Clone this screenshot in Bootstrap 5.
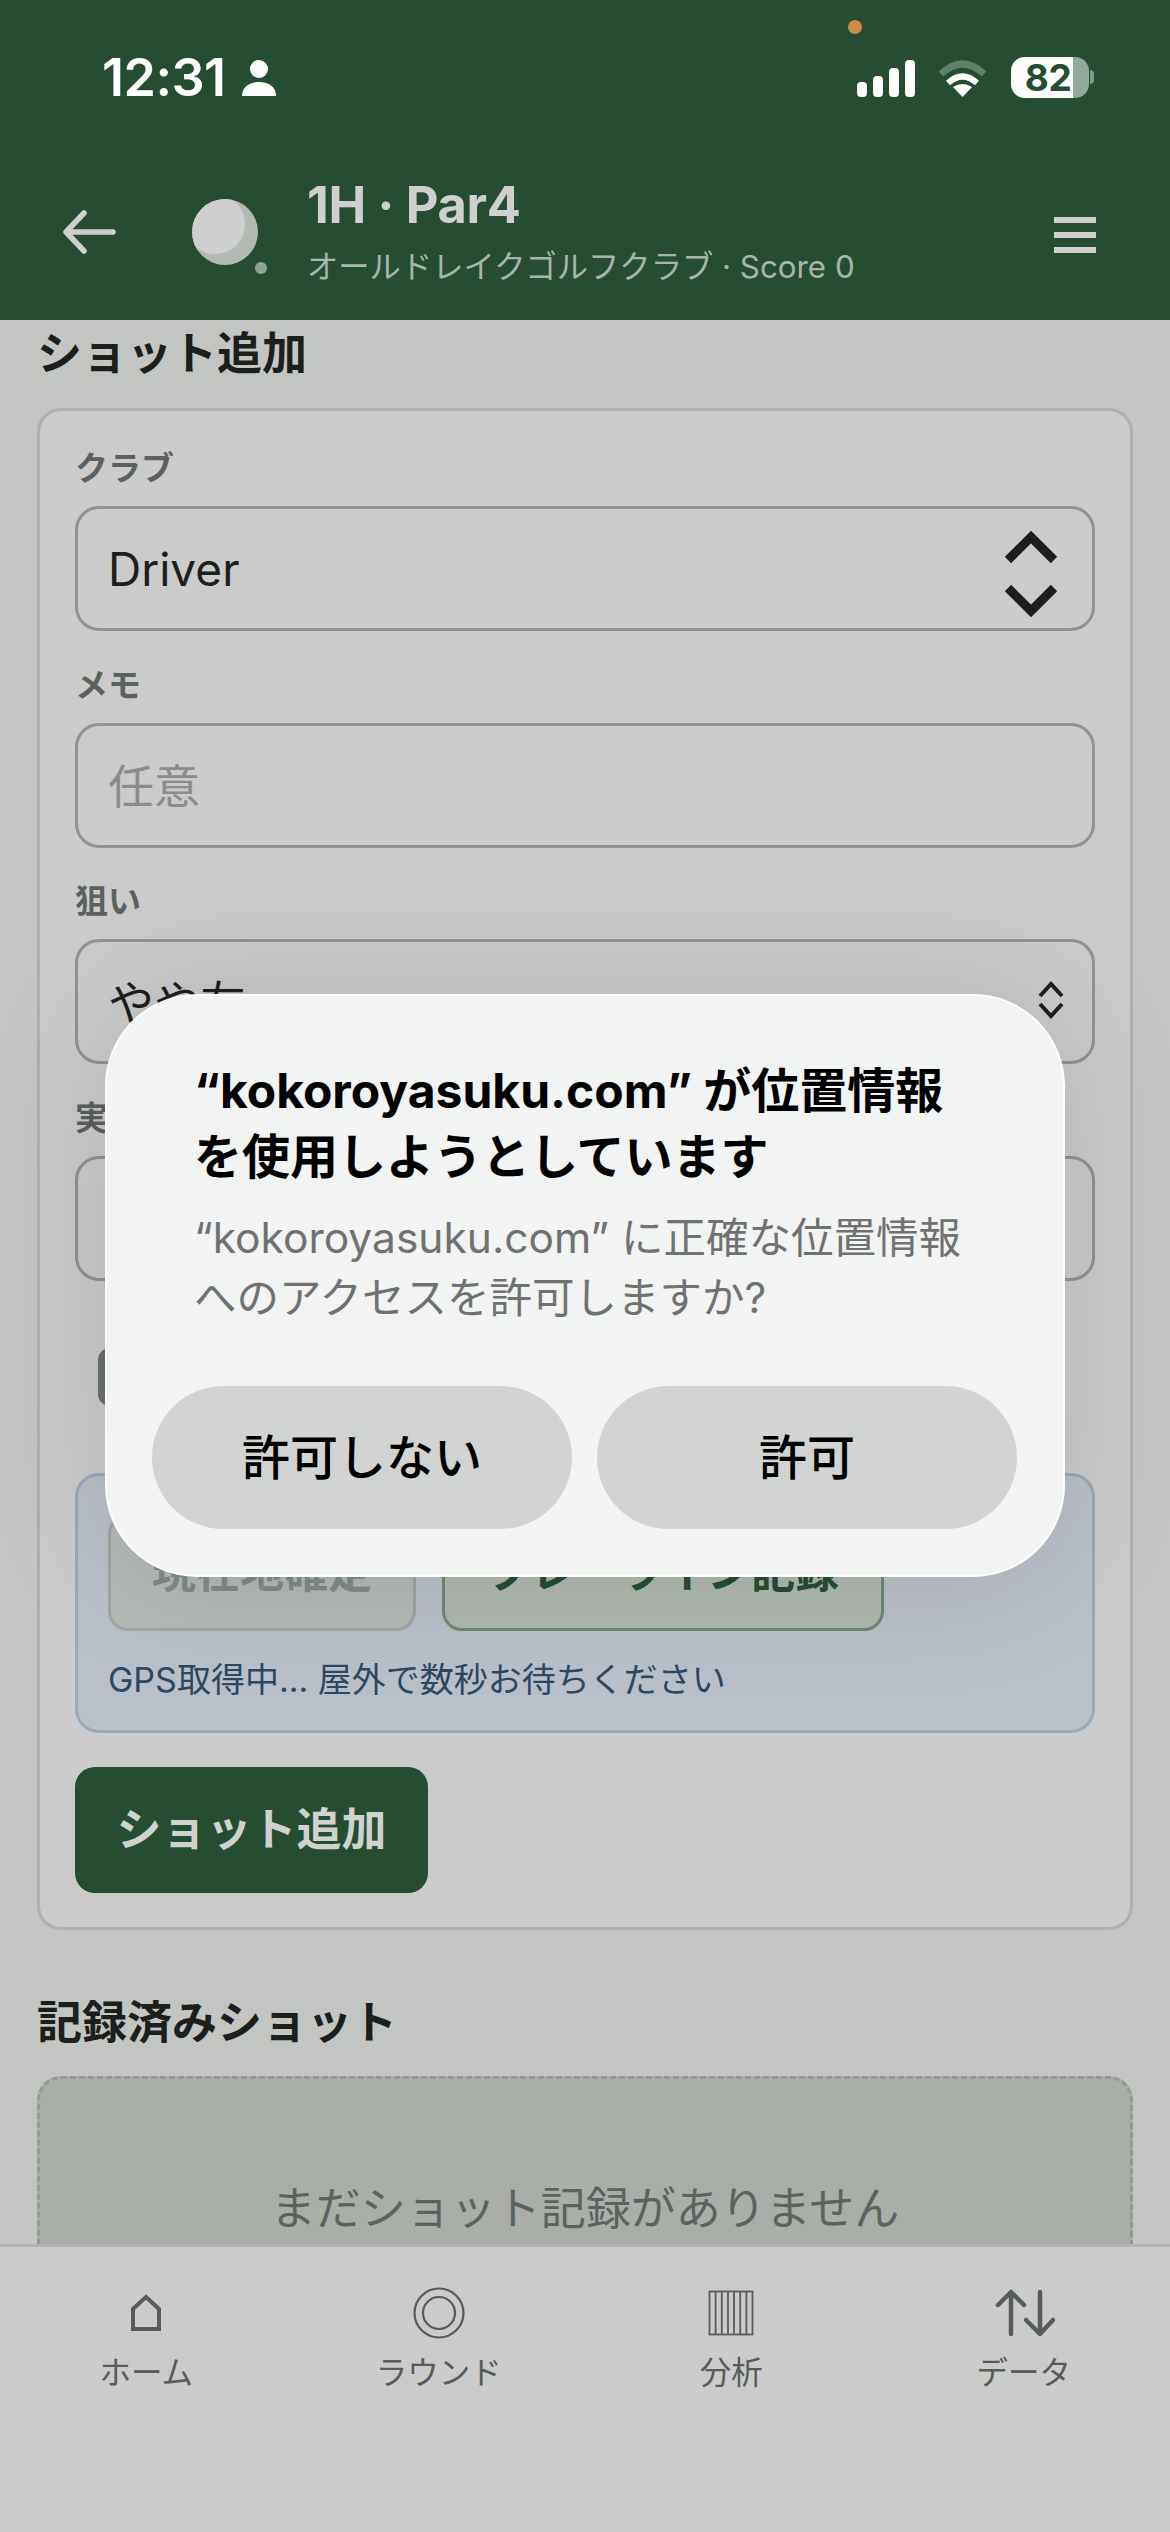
<!doctype html>
<html lang="ja">
<head>
<meta charset="utf-8">
<title>1H Par4</title>
<link rel="stylesheet" href="https://cdn.jsdelivr.net/npm/bootstrap@5.3.0/dist/css/bootstrap.min.css">
<style>
html,body{margin:0;padding:0;width:1170px;height:2532px;overflow:hidden}
body{font-family:Inter,"Noto Sans CJK JP",sans-serif;background:#c3c5c3;color:#1b201d}
.app-shell{width:1170px;height:2532px;position:relative;overflow:hidden}
.status-row{height:144px;background:#264d32;padding:60px 76px 0 102px;color:#fff}
.clock{font-size:52px;font-weight:600;line-height:36px;letter-spacing:-.5px}
.rec-dot{position:absolute;left:848px;top:20px;width:14px;height:14px;border-radius:50%;background:#cf8a46}
.batt{width:78px;height:41px;margin-top:-3px;border-radius:14px;background:linear-gradient(90deg,#fff 62px,#93a99c 62px);color:#264d32;font-size:37px;font-weight:700;line-height:41px;text-align:center;padding-right:4px;letter-spacing:-.5px}
.batt-nub{width:4px;height:14px;border-radius:0 4px 4px 0;background:#7f9a88;margin:10px 0 0 1px}
.wifi-mark{margin:0 23px}
.top-head{height:176px;background:#264d32;padding:0 74px 0 60px}
.ball-mark{margin-left:72px}
.head-text{margin-left:35px}
.head-title{font-size:50.5px;font-weight:700;line-height:60px;color:#cfcfcf;letter-spacing:-.3px}
.head-sub{font-size:31.3px;line-height:44px;color:#a8b5aa;margin-top:10px}
.burger{width:42px;margin-top:6px}
.burger span{display:block;height:6px;background:#d0d0d0;margin-bottom:9px}
.burger span:last-child{margin-bottom:0}
.scroll-area{height:1924px;overflow:hidden;padding:6px 37px 0;background:#c3c5c3}
.sec-title{font-size:45px;font-weight:700;line-height:56px;margin:0 0 26px;color:#1b201d}
.sec-two{margin-top:65px;margin-bottom:25px}
.form-panel{background:#cbcbcb;border:3px solid #adb1ad;border-radius:24px;padding:37px 35px 34px}
.field-label{display:block;font-size:33px;font-weight:600;line-height:40px;margin:0 0 18px;color:#5b615d}
.field-wrap{position:relative;margin-bottom:33.5px}
.form-select.field-box,.form-control.field-box{height:125px;background:#cbcbcb none;border:3px solid #8f948f;border-radius:24px;font-size:46px;padding:2px 30px 0;color:#1b201d;box-shadow:none}
.form-control.field-box::placeholder{color:#8a8d8a;opacity:1}
.chev{position:absolute;pointer-events:none}
.chev-big{right:37px;top:22px}
.chev-small{right:30px;top:41px}
.dark-tag{width:200px;height:58px;margin:67px 0 67px 23px;border-radius:12px;background:#6b716d}
.gps-box{height:260px;background:#bac0c9;border:3px solid #9aa9ba;border-radius:24px;padding:38px 30px 0;margin-bottom:34px}
.gps-actions{gap:26px}
.btn.gps-btn{height:117px;font-size:44px;font-weight:700;padding:0 40px;border-radius:20px;line-height:1}
.btn.gps-one{width:308px;background:#b5b9b7;border:3px solid #9fa6a4;color:#7f8c85}
.btn.gps-two{width:442px;background:#b0b9b0;border:3px solid #6f8a75;color:#264d32;white-space:nowrap}
.gps-note{font-size:34px;line-height:44px;color:#2d4862;margin-top:27px}
.btn.add-btn{height:126px;width:353px;background:#264d32;border:0;border-radius:20px;color:#cfd2cf;font-size:45px;font-weight:700;padding:0}
.empty-box{height:400px;background:#a9aea9;border:3px dashed #949994;border-radius:24px;padding-top:100px;text-align:center;font-size:45px;line-height:60px;color:#5c625e}
.tab-bar{height:288px;background:#cbcbcb;border-top:3px solid #b0b5b0;padding-top:41px}
.tab-item{width:292.5px;text-align:center;color:#565c58;font-size:31.5px;line-height:40px}
.tab-ico{height:50px;margin-bottom:15px;display:flex;align-items:center;justify-content:center}
.tab-arrows{margin-left:2px}
.dim-layer{position:absolute;inset:0;padding-top:994px;pointer-events:none}
.perm-box{width:960px;height:583px;background:#f2f3f3;border:2px solid #fdfdfd;border-radius:92px;padding:62px 45px 47px;box-shadow:0 0 130px rgba(0,0,0,.13)}
.perm-title{font-size:48px;font-weight:700;line-height:66px;color:#000;margin:0 0 18px 42px}
.perm-msg{font-size:42.5px;line-height:60px;color:#6f7270;margin:0 0 58px 42px}
.perm-actions{gap:25px}
.btn.perm-btn{width:420px;height:143px;border:0;border-radius:72px;background:#d2d3d3;color:#000;font-size:48px;font-weight:500;padding:0}
</style>
</head>
<body>
<div class="app-shell">
  <div class="status-row d-flex justify-content-between align-items-start">
    <div class="d-flex align-items-start gap-3">
      <span class="clock">12:31</span>
      <svg width="34" height="36" viewBox="0 0 34 36" fill="#fff"><circle cx="17" cy="9" r="9"/><path d="M0 36c0-9 7-14 17-14s17 5 17 14z"/></svg>
    </div>
    <div class="d-flex align-items-start">
      <svg width="58" height="37" viewBox="0 0 58 37" fill="#fff"><rect x="0" y="22" width="10" height="15" rx="4"/><rect x="16" y="16" width="10" height="21" rx="4"/><rect x="32" y="8" width="10" height="29" rx="4"/><rect x="48" y="0" width="10" height="37" rx="4"/></svg>
      <svg class="wifi-mark" width="50" height="38" viewBox="0 0 50 38" fill="none"><path d="M3 14Q24.500 -6 46 14" stroke="#5d8169" stroke-width="7"/><path d="M10 23Q24.500 10 39 23" stroke="#fff" stroke-width="6"/><path d="M24.500 37L15 27Q24.500 21 34 27Z" fill="#fff"/></svg>
      <div class="batt">82</div><div class="batt-nub"></div>
    </div>
  </div>
  <span class="rec-dot"></span>

  <header class="top-head d-flex align-items-center">
    <svg width="60" height="44" viewBox="0 0 60 44" fill="none" stroke="#cfcfcf" stroke-width="5.500" stroke-linecap="round" stroke-linejoin="round"><path d="M53 22H6M24 3L6 22l18 19"/></svg>
    <svg class="ball-mark" width="80" height="84" viewBox="0 0 80 84"><defs><clipPath id="ballclip"><circle cx="33" cy="42" r="33"/></clipPath></defs><circle cx="33" cy="42" r="33" fill="#b3bab3"/><circle cx="23" cy="34" r="30" fill="#cfcfcf" clip-path="url(#ballclip)"/><circle cx="69" cy="78" r="6" fill="#8ea596"/></svg>
    <div class="head-text">
      <div class="head-title">1H · Par4</div>
      <div class="head-sub">オールドレイクゴルフクラブ · Score 0</div>
    </div>
    <div class="burger ms-auto"><span></span><span></span><span></span></div>
  </header>

  <main class="scroll-area">
    <h2 class="sec-title">ショット追加</h2>
    <section class="form-panel">
      <label class="field-label">クラブ</label>
      <div class="field-wrap">
        <select class="form-select field-box"><option>Driver</option></select>
        <svg class="chev chev-big" width="54" height="92" viewBox="0 0 54 92" fill="none" stroke="#1a1f1c" stroke-width="9"><path d="M4 32L27 9L50 32M4 60L27 83L50 60"/></svg>
      </div>
      <label class="field-label">メモ</label>
      <div class="field-wrap"><input class="form-control field-box" placeholder="任意"></div>
      <label class="field-label">狙い</label>
      <div class="field-wrap">
        <select class="form-select field-box"><option>やや左</option></select>
        <svg class="chev chev-small" width="28" height="40" viewBox="0 0 28 40" fill="none" stroke="#1a1f1c" stroke-width="4"><path d="M3 16L14 4L25 16M3 24L14 36L25 24"/></svg>
      </div>
      <label class="field-label">実飛距離</label>
      <div class="field-wrap mb-0"><input class="form-control field-box"></div>
      <div class="dark-tag"></div>
      <div class="gps-box">
        <div class="d-flex gps-actions">
          <button class="btn gps-btn gps-one" type="button">現在地確定</button>
          <button class="btn gps-btn gps-two" type="button">プレーライン記録</button>
        </div>
        <div class="gps-note">GPS取得中... 屋外で数秒お待ちください</div>
      </div>
      <button class="btn add-btn" type="button">ショット追加</button>
    </section>
    <h2 class="sec-title sec-two">記録済みショット</h2>
    <div class="empty-box">まだショット記録がありません</div>
  </main>

  <nav class="tab-bar d-flex">
    <div class="tab-item">
      <div class="tab-ico"><svg width="30" height="38" viewBox="0 0 30 38" fill="none" stroke="#565c58" stroke-width="4"><path d="M2 35V15L15 3l13 12v20z"/></svg></div>ホーム
    </div>
    <div class="tab-item">
      <div class="tab-ico"><svg width="52" height="52" viewBox="0 0 52 52" fill="none" stroke="#565c58" stroke-width="2.200"><circle cx="26" cy="26" r="24.500"/><circle cx="26" cy="26" r="16"/></svg></div>ラウンド
    </div>
    <div class="tab-item">
      <div class="tab-ico"><svg width="46" height="46" viewBox="0 0 46 46" fill="none" stroke="#565c58" stroke-width="1.800"><rect x="1.500" y="1.500" width="43" height="43"/><path d="M7.600 1.500v43M13.800 1.500v43M20 1.500v43M26 1.500v43M32.200 1.500v43M38.400 1.500v43"/></svg></div>分析
    </div>
    <div class="tab-item">
      <div class="tab-ico"><svg class="tab-arrows" width="60" height="48" viewBox="0 0 60 48" fill="none" stroke="#565c58" stroke-width="4.500" stroke-linecap="round" stroke-linejoin="round"><path d="M16 45V3M3 16L16 3l13 13M45 3v42M31 31l14 14 13-14"/></svg></div>データ
    </div>
  </nav>

  <div class="dim-layer d-flex justify-content-center align-items-start">
    <div class="perm-box" role="alertdialog">
      <div class="perm-title">“kokoroyasuku.com” が位置情報<br>を使用しようとしています</div>
      <div class="perm-msg">“kokoroyasuku.com” に正確な位置情報<br>へのアクセスを許可しますか?</div>
      <div class="d-flex perm-actions">
        <button class="btn perm-btn" type="button">許可しない</button>
        <button class="btn perm-btn" type="button">許可</button>
      </div>
    </div>
  </div>
</div>
<script src="https://cdn.jsdelivr.net/npm/bootstrap@5.3.0/dist/js/bootstrap.bundle.min.js"></script>
</body>
</html>
